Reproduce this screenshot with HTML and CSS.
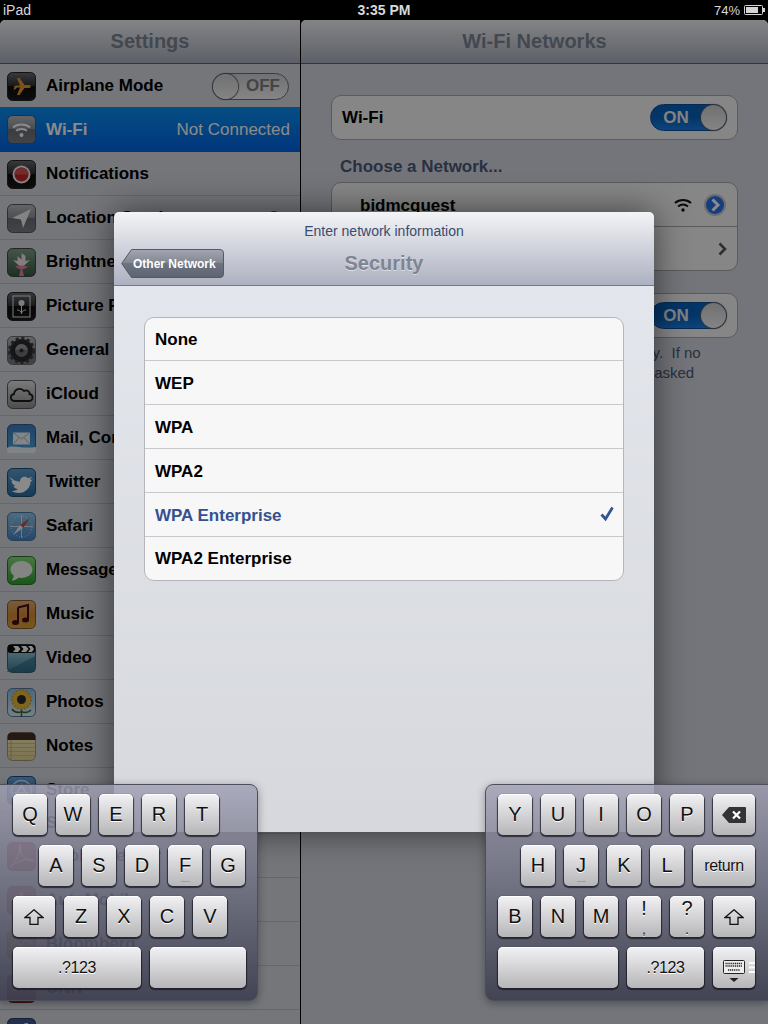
FILE: index.html
```html
<!DOCTYPE html>
<html lang="en">
<head>
    <meta charset="UTF-8">
    <meta name="viewport" content="width=device-width, initial-scale=1.0">
    <title>Settings - Security</title>
    <link rel="stylesheet" href="styles.css">
</head>
<body>
    <svg class="svg-defs" aria-hidden="true">
        <defs>
            <linearGradient id="g-dark" x1="0" y1="0" x2="0" y2="1"><stop offset="0" stop-color="#6a6c72"/><stop offset=".5" stop-color="#2c2d30"/><stop offset=".5" stop-color="#0c0c0e"/><stop offset="1" stop-color="#1a1a1c"/></linearGradient>
            <linearGradient id="g-grey" x1="0" y1="0" x2="0" y2="1"><stop offset="0" stop-color="#b9bcc4"/><stop offset=".5" stop-color="#8b8e98"/><stop offset=".5" stop-color="#6c6f7a"/><stop offset="1" stop-color="#7b7e88"/></linearGradient>
            <linearGradient id="g-mail" x1="0" y1="0" x2="0" y2="1"><stop offset="0" stop-color="#2f7fd6"/><stop offset="1" stop-color="#3aa5ec"/></linearGradient>
            <linearGradient id="g-twitter" x1="0" y1="0" x2="0" y2="1"><stop offset="0" stop-color="#4f9fe0"/><stop offset="1" stop-color="#1c6fb0"/></linearGradient>
            <linearGradient id="g-safari" x1="0" y1="0" x2="0" y2="1"><stop offset="0" stop-color="#8cc8f5"/><stop offset="1" stop-color="#2f88d8"/></linearGradient>
            <linearGradient id="g-msg" x1="0" y1="0" x2="0" y2="1"><stop offset="0" stop-color="#7fe06a"/><stop offset="1" stop-color="#1da51c"/></linearGradient>
            <linearGradient id="g-music" x1="0" y1="0" x2="0" y2="1"><stop offset="0" stop-color="#f0a860"/><stop offset=".5" stop-color="#e88a20"/><stop offset="1" stop-color="#f0a018"/></linearGradient>
            <linearGradient id="g-video" x1="0" y1="0" x2="0" y2="1"><stop offset="0" stop-color="#a8dcf0"/><stop offset="1" stop-color="#2a7ea0"/></linearGradient>
            <linearGradient id="g-photos" x1="0" y1="0" x2="0" y2="1"><stop offset="0" stop-color="#7ac0f4"/><stop offset="1" stop-color="#d8eefa"/></linearGradient>
            <linearGradient id="g-notes" x1="0" y1="0" x2="0" y2="1"><stop offset="0" stop-color="#fff0a8"/><stop offset="1" stop-color="#e8d488"/></linearGradient>
            <linearGradient id="g-store" x1="0" y1="0" x2="0" y2="1"><stop offset="0" stop-color="#58a8f0"/><stop offset="1" stop-color="#1f62c8"/></linearGradient>
            <linearGradient id="g-flower" x1="0" y1="0" x2="0" y2="1"><stop offset="0" stop-color="#7aa088"/><stop offset="1" stop-color="#2e5a3a"/></linearGradient>
            <linearGradient id="g-metal" x1="0" y1="0" x2="0" y2="1"><stop offset="0" stop-color="#e4e4e6"/><stop offset="1" stop-color="#8e8e92"/></linearGradient>
            <linearGradient id="g-back" x1="0" y1="0" x2="0" y2="1"><stop offset="0" stop-color="#a3a7b3"/><stop offset=".5" stop-color="#81858f"/><stop offset=".5" stop-color="#6d7380"/><stop offset="1" stop-color="#5e6472"/></linearGradient>
        </defs>
    </svg>

    <header class="status-bar">
        <span class="status-left">iPad</span>
        <span class="status-time">3:35 PM</span>
        <span class="status-right">
            74%
            <svg class="battery" width="21" height="10" viewBox="0 0 21 10"><rect x=".5" y=".5" width="18" height="9" rx="1" fill="none" stroke="#d4d4d4"/><rect x="2" y="2" width="12" height="6" fill="#d4d4d4"/><rect x="19" y="3" width="2" height="4" fill="#d4d4d4"/></svg>
        </span>
    </header>

    <div class="app">
        <aside class="sidebar">
            <div class="nav-bar">Settings</div>
            <ul class="settings-list">
                <li class="row">
                    <svg class="icon" viewBox="0 0 29 29"><rect x=".5" y=".5" width="28" height="28" rx="5" fill="url(#g-dark)" stroke="#222"/><path d="M6 14.5 L10 13.5 L13 13.5 L10 6 L12.5 6 L17.5 13 L22 13 C24.5 13 24.5 16 22 16 L17.5 16 L12.5 23 L10 23 L13 15.5 L10 15.5 L8 17.5 L6.5 17.5 L7.5 14.8Z" fill="#f0961e"/></svg>
                    <span class="row-label">Airplane Mode</span>
                    <span class="toggle toggle-off"><i class="knob"></i><b>OFF</b></span>
                </li>
                <li class="row row-selected">
                    <svg class="icon" viewBox="0 0 29 29"><rect x=".5" y=".5" width="28" height="28" rx="5" fill="url(#g-grey)" stroke="#555"/><g fill="none" stroke="#fff" stroke-width="2"><path d="M6 12.5 C10.5 8.5 18.5 8.5 23 12.5"/><path d="M9 15.8 C12 13.3 17 13.3 20 15.8"/></g><circle cx="14.5" cy="20" r="2" fill="#fff"/></svg>
                    <span class="row-label">Wi-Fi</span>
                    <span class="row-value">Not Connected</span>
                </li>
                <li class="row">
                    <svg class="icon" viewBox="0 0 29 29"><rect x=".5" y=".5" width="28" height="28" rx="5" fill="url(#g-dark)" stroke="#222"/><circle cx="14.5" cy="14.5" r="9" fill="#f4f4f4"/><circle cx="14.5" cy="14.5" r="7" fill="#e02020"/><path d="M7.5 14.5 a7 7 0 0 1 14 0Z" fill="#f04a4a"/></svg>
                    <span class="row-label">Notifications</span>
                </li>
                <li class="row">
                    <svg class="icon" viewBox="0 0 29 29"><rect x=".5" y=".5" width="28" height="28" rx="5" fill="url(#g-grey)" stroke="#555"/><path d="M24 5 L5 14 L14 15.5 L16 24Z" fill="#f2f2f4"/></svg>
                    <span class="row-label">Location Services</span>
                    <span class="row-value row-value-dark">On</span>
                </li>
                <li class="row">
                    <svg class="icon" viewBox="0 0 29 29"><rect x=".5" y=".5" width="28" height="28" rx="5" fill="url(#g-flower)" stroke="#444"/><path d="M14.5 20 L6 12 L10.5 13 L10.5 8 L14.5 11.5 L14.5 5 L18.5 8 L18.5 13 L23 12Z" fill="#f8e4ea"/><path d="M8 19 C11 17 18 17 21 19 L14.5 22Z" fill="#f080a8"/><path d="M13.5 22 L12 28 L17 28 L15.5 22Z" fill="#f080a8"/></svg>
                    <span class="row-label">Brightness &amp; Wallpaper</span>
                </li>
                <li class="row">
                    <svg class="icon" viewBox="0 0 29 29"><rect x=".5" y=".5" width="28" height="28" rx="5" fill="url(#g-dark)" stroke="#222"/><rect x="6" y="4" width="17" height="21" fill="none" stroke="#e8e8e8"/><circle cx="14.5" cy="11" r="3" fill="#e8e8e8"/><path d="M14.5 14 V22 M10 18 C12 18 14 19 14.5 21 C15 19 17 18 19 18" fill="none" stroke="#e8e8e8"/></svg>
                    <span class="row-label">Picture Frame</span>
                </li>
                <li class="row">
                    <svg class="icon" viewBox="0 0 29 29"><rect x=".5" y=".5" width="28" height="28" rx="5" fill="url(#g-grey)" stroke="#666"/><circle cx="14.5" cy="14.5" r="9" fill="none" stroke="#2a2a2c" stroke-width="5"/><circle cx="14.5" cy="14.5" r="12" fill="none" stroke="#3a3a3c" stroke-width="3" stroke-dasharray="3 2.6"/><circle cx="14.5" cy="14.5" r="2" fill="#2a2a2c"/></svg>
                    <span class="row-label">General</span>
                </li>
                <li class="row">
                    <svg class="icon" viewBox="0 0 29 29"><rect x=".5" y=".5" width="28" height="28" rx="5" fill="url(#g-metal)" stroke="#555"/><path d="M8 21 C3 21 2.5 15 7 14 C7.5 9 14 7 17 11 C20 9.5 23 11.5 22.5 14 C27 15 26.5 21 21.5 21Z" fill="none" stroke="#1c1c1e" stroke-width="1.8"/></svg>
                    <span class="row-label">iCloud</span>
                </li>
                <li class="row">
                    <svg class="icon" viewBox="0 0 29 29"><rect x=".5" y=".5" width="28" height="28" rx="5" fill="url(#g-mail)" stroke="#2a5c98"/><path d="M0 24 C6 20 12 25 29 23 L29 26 Q29 29 26 29 L3 29 Q0 29 0 26Z" fill="#e8f4fc"/><rect x="6" y="8.5" width="17" height="12" fill="#f4f6f8"/><path d="M6 8.5 L14.5 15 L23 8.5 M6 20.5 L12 13.5 M23 20.5 L17 13.5" fill="none" stroke="#9ba6b2" stroke-width=".8"/></svg>
                    <span class="row-label">Mail, Contacts, Calendars</span>
                </li>
                <li class="row">
                    <svg class="icon" viewBox="0 0 29 29"><rect x=".5" y=".5" width="28" height="28" rx="5" fill="url(#g-twitter)" stroke="#174e7c"/><path d="M3 9 C6 12 9 13.5 13 13.7 C12.5 9.5 18 7 21 10.3 L25 9 L23 12 L26 11.5 L23.5 14 C23.5 20 18 25 12 25 C9 25 6.5 24 4.5 23 C7 23 9 22.5 11 21 C8.5 21 7 19.5 6.3 18 L8.5 18 C6 17 4.5 15 4.5 12.8 L6.5 13.3 C4 12 3 10.5 3 9Z" fill="#fff"/></svg>
                    <span class="row-label">Twitter</span>
                </li>
                <li class="row">
                    <svg class="icon" viewBox="0 0 29 29"><rect x=".5" y=".5" width="28" height="28" rx="5" fill="url(#g-safari)" stroke="#3a78b0"/><circle cx="14.5" cy="14.5" r="10.5" fill="none" stroke="#dff0fc" stroke-width="1" stroke-dasharray="1 2"/><path d="M14.5 3 V26 M3 14.5 H26" stroke="#eef6fc" stroke-width=".8"/><path d="M23 6 L16 16 L13 13Z" fill="#e8452c"/><path d="M6 23 L13 13 L16 16Z" fill="#f4f4f4"/></svg>
                    <span class="row-label">Safari</span>
                </li>
                <li class="row">
                    <svg class="icon" viewBox="0 0 29 29"><rect x=".5" y=".5" width="28" height="28" rx="5" fill="url(#g-msg)" stroke="#1b7a1e"/><ellipse cx="14.5" cy="13.5" rx="11" ry="8.5" fill="#f4f6f0"/><path d="M7 18 C7 21 6 23 4.5 24.5 C8 24.5 10 23 12 21Z" fill="#f4f6f0"/></svg>
                    <span class="row-label">Messages</span>
                </li>
                <li class="row">
                    <svg class="icon" viewBox="0 0 29 29"><rect x=".5" y=".5" width="28" height="28" rx="5" fill="url(#g-music)" stroke="#8a5a20"/><path d="M11 7.5 L21 5 V19.5 M11 7.5 V22" fill="none" stroke="#4a0c12" stroke-width="2"/><ellipse cx="8.5" cy="22.5" rx="3.5" ry="2.5" fill="#4a0c12"/><ellipse cx="18.5" cy="20" rx="3.5" ry="2.5" fill="#4a0c12"/></svg>
                    <span class="row-label">Music</span>
                </li>
                <li class="row">
                    <svg class="icon" viewBox="0 0 29 29"><rect x=".5" y=".5" width="28" height="28" rx="5" fill="url(#g-video)" stroke="#2a6078"/><path d="M0 27 L28 12 V28 H0Z" fill="#1f6a8a" opacity=".6"/><rect x=".5" y=".5" width="28" height="8.5" rx="3" fill="#0c0c0e"/><path d="M6 2 L11 2 L13.5 5 L11 8 L6 8 L8.5 5Z M14 2 L19 2 L21.5 5 L19 8 L14 8 L16.5 5Z M21 2 L25 2 L27 5 L25 8 L21 8 L23.5 5Z" fill="#fff"/></svg>
                    <span class="row-label">Video</span>
                </li>
                <li class="row">
                    <svg class="icon" viewBox="0 0 29 29"><rect x=".5" y=".5" width="28" height="28" rx="5" fill="url(#g-photos)" stroke="#4a7aa8"/><path d="M14.5 18 V29" stroke="#2f6a1c" stroke-width="1.5"/><path d="M14 24 C10 25 7 24 5 21 M15 24 C19 25 22 24 24 22" fill="none" stroke="#2f6a1c" stroke-width="1.5"/><circle cx="14.5" cy="11.5" r="9.5" fill="#f4bd1e" stroke="#e89a10" stroke-width="2" stroke-dasharray="2 1.5"/><circle cx="14.5" cy="11.5" r="4.5" fill="#2a2a2a"/></svg>
                    <span class="row-label">Photos</span>
                </li>
                <li class="row">
                    <svg class="icon" viewBox="0 0 29 29"><rect x=".5" y=".5" width="28" height="28" rx="5" fill="url(#g-notes)" stroke="#a09868"/><path d="M.5 8 V5 Q.5 .5 5 .5 H24 Q28.5 .5 28.5 5 V8Z" fill="#4a2e24"/><path d="M1 11.5 H28 M1 15.5 H28 M1 19.5 H28 M1 23.5 H28" stroke="#d0bd74" stroke-width=".8"/><path d="M4 8 V28" stroke="#c8a060" stroke-width=".8"/></svg>
                    <span class="row-label">Notes</span>
                </li>
                <li class="row">
                    <svg class="icon" viewBox="0 0 29 29"><rect x=".5" y=".5" width="28" height="28" rx="5" fill="url(#g-store)" stroke="#1c4a90"/><circle cx="14.5" cy="14.5" r="10" fill="none" stroke="#dbe8f6" stroke-width="1.5"/><path d="M9 19 L15 8 M14 8 L20 19 M7 17 H22" fill="none" stroke="#f2f6fb" stroke-width="2"/></svg>
                    <span class="row-label">Store</span>
                </li>
                <li class="row row-section"><span class="row-label">S</span></li>
                <li class="row">
                    <svg class="icon" viewBox="0 0 29 29"><rect x=".5" y=".5" width="28" height="28" rx="5" fill="#c9242a" stroke="#8a1c20"/><path d="M3 25 C9 20 14 8 14 4 C14 2 12 3 12.5 6 C13 12 19 19 26 19 C27 17 20 16 14 19 C9 20.5 4 24 3 25Z" fill="none" stroke="#f4e8e8"/></svg>
                    <span class="row-label">Adobe Reader</span>
                </li>
                <li class="row">
                    <svg class="icon" viewBox="0 0 29 29"><rect x=".5" y=".5" width="28" height="28" rx="5" fill="#d23a36" stroke="#8a2420"/><path d="M14.5 5 L6 24 H11 L14.5 15 L18 24 H23Z" fill="#f4e4e4"/></svg>
                    <span class="row-label">AutoMobile</span>
                </li>
                <li class="row">
                    <svg class="icon" viewBox="0 0 29 29"><rect x=".5" y=".5" width="28" height="28" rx="5" fill="#d97a2a" stroke="#8a5a20"/><path d="M3 18 L9 10 L14 17 L19 8 L26 15" fill="none" stroke="#f4d4a4" stroke-width="1.5"/></svg>
                    <span class="row-label">Bloomberg</span>
                </li>
                <li class="row">
                    <svg class="icon" viewBox="0 0 29 29"><rect x=".5" y=".5" width="28" height="28" rx="5" fill="#b8242a" stroke="#7a1c20"/><circle cx="8" cy="15" r="2" fill="#eee"/><circle cx="14.5" cy="15" r="2" fill="#eee"/><circle cx="21" cy="15" r="2" fill="#eee"/></svg>
                    <span class="row-label">CNN</span>
                </li>
                <li class="row">
                    <svg class="icon" viewBox="0 0 29 29"><rect x=".5" y=".5" width="28" height="28" rx="5" fill="#3b5a9a" stroke="#24386a"/><path d="M15 28 V16 H12 V12 H15 V9 C15 6 17 5 21 5 V9 C19 9 19 9.5 19 12 H21 V16 H19 V28Z" fill="#f2f4f8"/></svg>
                </li>
            </ul>
        </aside>

        <section class="detail">
            <div class="nav-bar">Wi-Fi Networks</div>
            <div class="detail-body">
                <div class="group">
                    <div class="cell">
                        <span class="cell-label">Wi-Fi</span>
                        <span class="toggle toggle-on"><b>ON</b><i class="knob"></i></span>
                    </div>
                </div>
                <h2 class="group-title">Choose a Network...</h2>
                <div class="group">
                    <div class="cell cell-line">
                        <span class="cell-label cell-indent">bidmcquest</span>
                        <svg class="wifi-mini" width="18" height="14" viewBox="0 0 18 14"><g fill="none" stroke="#111" stroke-width="2"><path d="M1 5 C5.5 1 12.5 1 17 5"/><path d="M4 8.5 C7 6 11 6 14 8.5"/></g><circle cx="9" cy="12" r="1.7" fill="#111"/></svg>
                        <svg class="disclosure" width="24" height="24" viewBox="0 0 24 24"><circle cx="12" cy="12" r="11" fill="#c4c8d0"/><circle cx="12" cy="12" r="9" fill="#2a74e8"/><path d="M9.5 6.5 L15 12 L9.5 17.5" fill="none" stroke="#fff" stroke-width="3"/></svg>
                    </div>
                    <div class="cell">
                        <span class="cell-label cell-indent">Other...</span>
                        <svg class="chevron" width="9" height="14" viewBox="0 0 9 14"><path d="M1.5 1.5 L7 7 L1.5 12.5" fill="none" stroke="#555" stroke-width="2.5"/></svg>
                    </div>
                </div>
                <div class="group group-ask">
                    <div class="cell">
                        <span class="cell-label">Ask to Join Networks</span>
                        <span class="toggle toggle-on"><b>ON</b><i class="knob"></i></span>
                    </div>
                </div>
                <p class="group-note">Known networks will be joined automatically.&nbsp; If no known networks are available, you will be asked before joining a new network.</p>
            </div>
        </section>

        <div class="dim"></div>

        <div class="modal">
            <div class="modal-head">
                <div class="modal-prompt">Enter network information</div>
                <div class="modal-bar">
                    <a class="back-btn" href="#">
                        <svg class="back-shape" width="103" height="29" viewBox="0 0 103 29"><path d="M.7 14.5 L10.5 .5 H99 Q102.5 .5 102.5 4 V25 Q102.5 28.5 99 28.5 H10.5Z" fill="url(#g-back)" stroke="#555a68"/></svg>
                        <span>Other Network</span>
                    </a>
                    <h1 class="modal-title">Security</h1>
                </div>
            </div>
            <div class="modal-body">
                <ul class="choices">
                    <li>None</li>
                    <li>WEP</li>
                    <li>WPA</li>
                    <li>WPA2</li>
                    <li class="choice-on">WPA Enterprise
                        <svg width="14" height="15" viewBox="0 0 14 15"><path d="M1.5 8.5 L5.5 13 L12.5 1.5" fill="none" stroke="#34548f" stroke-width="2.8"/></svg>
                    </li>
                    <li>WPA2 Enterprise</li>
                </ul>
            </div>
        </div>

        <div class="kb kb-left">
            <div class="kb-row">
                <span class="key">Q</span><span class="key">W</span><span class="key">E</span><span class="key">R</span><span class="key">T</span>
            </div>
            <div class="kb-row kb-row-a">
                <span class="key">A</span><span class="key">S</span><span class="key">D</span><span class="key key-home">F</span><span class="key">G</span>
            </div>
            <div class="kb-row">
                <span class="key key-wide">
                    <svg width="20" height="16" viewBox="0 0 20 16"><path d="M10 .8 L19 8.5 H14 V15.3 H6 V8.5 H1Z" fill="none" stroke="#111" stroke-width="1.3"/></svg>
                </span>
                <span class="key">Z</span><span class="key">X</span><span class="key">C</span><span class="key">V</span>
            </div>
            <div class="kb-row">
                <span class="key key-num key-small">.?123</span>
                <span class="key key-space"></span>
            </div>
        </div>

        <div class="kb kb-right">
            <div class="kb-row">
                <span class="key">Y</span><span class="key">U</span><span class="key">I</span><span class="key">O</span><span class="key">P</span>
                <span class="key key-wide">
                    <svg width="24" height="16" viewBox="0 0 24 16"><path d="M7 0 H23 Q24 0 24 1 V15 Q24 16 23 16 H7 L0 8Z" fill="#333"/><path d="M11 4.5 L18 11.5 M18 4.5 L11 11.5" stroke="#fff" stroke-width="2.2"/></svg>
                </span>
            </div>
            <div class="kb-row kb-row-h">
                <span class="key">H</span><span class="key key-home">J</span><span class="key">K</span><span class="key">L</span>
                <span class="key key-return key-small">return</span>
            </div>
            <div class="kb-row">
                <span class="key">B</span><span class="key">N</span><span class="key">M</span>
                <span class="key key-punct"><em>!</em><em class="punct-low">,</em></span>
                <span class="key key-punct"><em>?</em><em class="punct-low">.</em></span>
                <span class="key key-wide">
                    <svg width="20" height="16" viewBox="0 0 20 16"><path d="M10 .8 L19 8.5 H14 V15.3 H6 V8.5 H1Z" fill="none" stroke="#111" stroke-width="1.3"/></svg>
                </span>
            </div>
            <div class="kb-row">
                <span class="key key-space-r"></span>
                <span class="key key-num-r key-small">.?123</span>
                <span class="key key-wide">
                    <svg width="42" height="41" viewBox="0 0 42 41"><rect x="10.5" y="13.5" width="21" height="13" rx="1" fill="#eee" stroke="#222"/><path d="M12.5 16.5 H29.5 M12.5 19 H29.5 M15 23 H27" stroke="#222" stroke-width="1.4" stroke-dasharray="1.2 .7"/><path d="M16.5 31 H25.5 L21 35Z" fill="#222"/><path d="M36 16 H42 M36 20.5 H42 M36 25 H42" stroke="#fafafa" stroke-width="2"/></svg>
                </span>
            </div>
        </div>
    </div>
</body>
</html>
```

FILE: styles.css
```css
/* Base */
html, body {
    margin: 0;
    padding: 0;
    background-color: #000;
}

body {
    width: 768px;
    height: 1024px;
    overflow: hidden;
    font-family: "Liberation Sans", Arial, sans-serif;
}

.svg-defs {
    position: absolute;
    width: 0;
    height: 0;
}

ul {
    list-style: none;
    margin: 0;
    padding: 0;
}

/* Status bar */
.status-bar {
    height: 20px;
    padding: 0 3px;
    display: grid;
    grid-template-columns: 1fr auto 1fr;
    align-items: center;
    color: #d8d8d8;
    font-size: 14px;
}

.status-time {
    font-weight: bold;
}

.status-right {
    justify-self: end;
    display: flex;
    align-items: center;
    gap: 4px;
    font-size: 13px;
}

/* App behind the modal */
.app {
    position: relative;
    height: 1004px;
    display: flex;
    overflow: hidden;
    background-color: #000;
    border-radius: 5px 5px 0 0;
}

.sidebar {
    width: 300px;
    flex: none;
    background-color: #d8dbe2;
    border-radius: 5px 0 0 0;
    overflow: hidden;
}

.detail {
    margin-left: 1px;
    flex: 1;
    background-color: #d6d9e1;
    border-radius: 5px 5px 0 0;
    overflow: hidden;
}

.nav-bar {
    box-sizing: border-box;
    height: 44px;
    line-height: 42px;
    text-align: center;
    font-size: 20px;
    font-weight: bold;
    color: #7d8594;
    background: linear-gradient(#f3f4f7, #adb2c1);
    border-bottom: 1px solid #5e6372;
}

/* Settings rows */
.row {
    box-sizing: border-box;
    height: 44px;
    padding: 1px 10px 0 7px;
    display: flex;
    align-items: center;
    border-bottom: 1px solid #bcbfc6;
    font-size: 17px;
    font-weight: bold;
    color: #000;
    white-space: nowrap;
}

.row-selected {
    height: 45px;
    margin-top: -1px;
    background: linear-gradient(#0a90f0, #0266e8);
    border-bottom-color: #0266e8;
    color: #fff;
}

.row-section {
    height: 22px;
    padding-left: 46px;
}

.icon {
    width: 29px;
    height: 29px;
    flex: none;
    margin-right: 10px;
    filter: saturate(.8);
}

.row-label {
    flex: 1;
}

.row-value {
    font-weight: normal;
}

.row-value-dark {
    color: #35508a;
}

/* Toggles */
.toggle {
    box-sizing: border-box;
    width: 77px;
    height: 27px;
    display: flex;
    align-items: center;
    border-radius: 14px;
    border: 1px solid #6b6e76;
    font-size: 17px;
    font-weight: bold;
    flex: none;
}

.toggle b {
    flex: 1;
    text-align: center;
}

.toggle-off {
    margin-right: 1px;
    background: linear-gradient(#cfd1d5, #f6f6f6);
    color: #7d7f84;
}

.toggle-on {
    background: linear-gradient(#0762bf 50%, #1c80e6);
    border-color: #0c4e96;
    color: #f0f0f0;
}

.toggle .knob {
    width: 25px;
    height: 25px;
    border-radius: 50%;
    background: linear-gradient(#cfd0d3, #f4f4f4);
    box-shadow: 0 0 1px 1px #5c5e64;
    flex: none;
}

/* Wi-Fi panel */
.detail-body {
    padding: 31px 30px 0 30px;
}

.group {
    background-color: #f7f7f7;
    border: 1px solid #a6a8ae;
    border-radius: 10px;
}

.group-ask {
    margin-top: 22px;
}

.cell {
    box-sizing: border-box;
    height: 43px;
    padding: 0 10px;
    display: flex;
    align-items: center;
    gap: 11px;
}

.cell-line {
    height: 44px;
    border-bottom: 1px solid #a6a8ae;
}

.cell-label {
    flex: 1;
    font-size: 17px;
    font-weight: bold;
    color: #000;
}

.cell-indent {
    padding: 2px 0 0 18px;
}

.group-title {
    margin: 17px 0 5px 9px;
    font-size: 17px;
    line-height: 20px;
    color: #4c5a78;
}

.group-note {
    margin: 5px 0 0 0;
    padding: 0 30px;
    font-size: 15px;
    line-height: 20px;
    text-align: center;
    color: #4c5a78;
}

/* Dim layer over the app */
.dim {
    position: absolute;
    inset: 0;
    background-color: rgba(0, 0, 0, .46);
}

/* Modal */
.modal {
    position: absolute;
    left: 114px;
    top: 192px;
    width: 540px;
    height: 620px;
    display: flex;
    flex-direction: column;
    border-radius: 5px 5px 0 0;
    overflow: hidden;
    box-shadow: 0 0 34px rgba(0, 0, 0, .55);
}

.modal-head {
    box-sizing: border-box;
    height: 74px;
    flex: none;
    background: linear-gradient(#f3f4f7, #adb1c0);
    border-bottom: 1px solid #71788c;
}

.modal-prompt {
    padding-top: 11px;
    line-height: 17px;
    text-align: center;
    font-size: 14px;
    color: #3a4b6e;
}

.modal-bar {
    position: relative;
    margin-top: 9px;
    height: 29px;
    display: flex;
    align-items: center;
    justify-content: center;
}

.back-btn {
    position: absolute;
    left: 7px;
    top: 0;
    width: 103px;
    height: 29px;
    text-decoration: none;
}

.back-shape {
    display: block;
}

.back-btn span {
    position: absolute;
    left: 12px;
    top: 1px;
    line-height: 29px;
    font-size: 12px;
    font-weight: bold;
    color: #fff;
    white-space: nowrap;
}

.modal-title {
    margin: 0;
    font-size: 20px;
    font-weight: bold;
    color: #7e8492;
    text-shadow: 0 1px 0 rgba(255, 255, 255, .5);
}

.modal-body {
    flex: 1;
    padding: 31px 30px 0 30px;
    background: linear-gradient(#e3e6ec, #d6d8dd);
}

.choices {
    background-color: #f7f7f7;
    border: 1px solid #b4b6bb;
    border-radius: 10px;
}

.choices li {
    box-sizing: border-box;
    height: 44px;
    padding: 2px 9px 0 10px;
    display: flex;
    align-items: center;
    justify-content: space-between;
    border-bottom: 1px solid #c8c9cc;
    font-size: 17px;
    font-weight: bold;
    color: #000;
}

.choices li:first-child {
    height: 43px;
    padding-top: 1px;
}

.choices li:last-child {
    height: 43px;
    padding-top: 1px;
    border-bottom: none;
}

.choices .choice-on {
    color: #35508f;
}

.choice-on svg {
    margin-bottom: 4px;
}

/* Split keyboard */
.kb {
    position: absolute;
    top: 764px;
    box-sizing: border-box;
    height: 217px;
    padding: 9px 0 0 13px;
    display: flex;
    flex-direction: column;
    gap: 10px;
    background: linear-gradient(rgba(160, 160, 180, .82), rgba(62, 64, 80, .92));
    border: 1px solid #4c4e5c;
    box-shadow: 0 2px 8px rgba(0, 0, 0, .35);
}

.kb-left {
    left: -1px;
    width: 259px;
    border-radius: 0 8px 8px 0;
}

.kb-right {
    left: 485px;
    width: 284px;
    padding-left: 12px;
    border-radius: 8px 0 0 8px;
}

.kb-row {
    display: flex;
    gap: 9px;
}

.kb-row-a {
    margin-left: 26px;
}

.kb-row-h {
    margin-left: 23px;
}

.key {
    position: relative;
    box-sizing: border-box;
    width: 34px;
    height: 41px;
    display: flex;
    align-items: center;
    justify-content: center;
    flex: none;
    border-radius: 5px;
    background: linear-gradient(#f2f2f4, #b6b6b9);
    box-shadow: inset 0 1px 0 #fff, 0 1px 1px 1px rgba(20, 20, 28, .75);
    font-size: 20px;
    color: #111;
    text-shadow: 0 1px 0 #fff;
}

.key-small {
    font-size: 16px;
    letter-spacing: -.4px;
}

.key-wide {
    width: 42px;
}

.key-num {
    width: 128px;
}

.key-space {
    width: 96px;
}

.key-space-r {
    width: 120px;
}

.key-num-r {
    width: 77px;
}

.key-return {
    width: 62px;
}

.key-home::after {
    content: "";
    position: absolute;
    left: 13px;
    bottom: 4px;
    width: 9px;
    height: 1px;
    background-color: #9c9ca0;
}

.key-punct {
    flex-direction: column;
    gap: 7px;
}

.key-punct em {
    font-style: normal;
    line-height: 18px;
}

.key-punct .punct-low {
    font-size: 14px;
    line-height: 10px;
}
```
